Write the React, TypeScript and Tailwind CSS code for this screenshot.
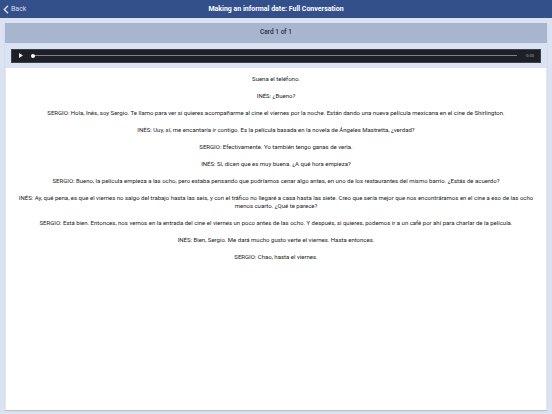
const lines: string[] = [
  "Suena el teléfono.",
  "INÉS: ¿Bueno?",
  "SERGIO: Hola, Inés, soy Sergio. Te llamo para ver si quieres acompañarme al cine el viernes por la noche. Están dando una nueva película mexicana en el cine de Shirlington.",
  "INÉS: Uuy, sí, me encantaría ir contigo. Es la película basada en la novela de Ángeles Mastretta, ¿verdad?",
  "SERGIO: Efectivamente. Yo también tengo ganas de verla.",
  "INÉS: Sí, dicen que es muy buena. ¿A qué hora empieza?",
  "SERGIO: Bueno, la película empieza a las ocho, pero estaba pensando que podríamos cenar algo antes, en uno de los restaurantes del mismo barrio. ¿Estás de acuerdo?",
  "INÉS: Ay, qué pena, es que el viernes no salgo del trabajo hasta las seis, y con el tráfico no llegaré a casa hasta las siete. Creo que sería mejor que nos encontráramos en el cine a eso de las ocho menos cuarto. ¿Qué te parece?",
  "SERGIO: Está bien. Entonces, nos vemos en la entrada del cine el viernes un poco antes de las ocho. Y después, si quieres, podemos ir a un café por ahí para charlar de la película.",
  "INÉS: Bien, Sergio. Me dará mucho gusto verte el viernes. Hasta entonces.",
  "SERGIO: Chao, hasta el viernes.",
];

export default function App() {
  return (
    <div
      className="w-[552px] h-[414px] bg-[#dbe3f3] flex flex-col overflow-hidden"
      style={{ fontFamily: "Roboto, 'Liberation Sans', sans-serif" }}
    >
      {/* Top bar */}
      <div className="h-[18px] bg-[#34508b] flex items-center relative shrink-0">
        <div className="absolute left-[3px] top-0 h-full flex items-center text-[#d6def0] text-[7px]">
          <svg width="6" height="9" viewBox="0 0 6 9" className="mr-[2px]">
            <path d="M5 0.8 L1.3 4.5 L5 8.2" stroke="#d6def0" strokeWidth="1.4" fill="none" />
          </svg>
          Back
        </div>
        <div className="w-full text-center text-white font-bold text-[7px]">
          Making an informal date: Full Conversation
        </div>
      </div>

      {/* Card */}
      <div className="mx-[5px] mt-[5px] mb-[4px] flex-1 flex flex-col shadow-[0_1px_1px_rgba(0,0,0,0.15)]">
        <div className="h-[20px] bg-[#a8b5cf] flex items-center justify-center text-[#2a2f3a] text-[6.5px] font-medium">
          Card 1 of 1
        </div>
        <div className="h-[25px] bg-[#dbe3f3] flex items-center px-[6px]">
          <div className="flex-1 h-[14px] bg-[#1d2027] border border-[#3a3f49] flex items-center pl-[7px] pr-[6px]">
            <svg width="4" height="5" viewBox="0 0 4 5">
              <path d="M0 0 L4 2.5 L0 5 Z" fill="#e8e8e8" />
            </svg>
            <div className="flex-1 ml-[8px] mr-[8px] h-[1px] bg-[#7c8494] relative">
              <div className="absolute left-0 top-[-1.5px] w-[4px] h-[4px] rounded-full bg-white" />
            </div>
            <span className="text-[#9aa0ab] text-[4px]">-0:00</span>
          </div>
        </div>
        <div className="flex-1 bg-white border-x border-[#e6e8ec] pt-[7px] px-[8px] text-[#222] text-[6px] leading-[8px] text-center">
          {lines.map((t, i) => (
            <p key={i} className="mb-[9px]">
              {t}
            </p>
          ))}
        </div>
      </div>
    </div>
  );
}
